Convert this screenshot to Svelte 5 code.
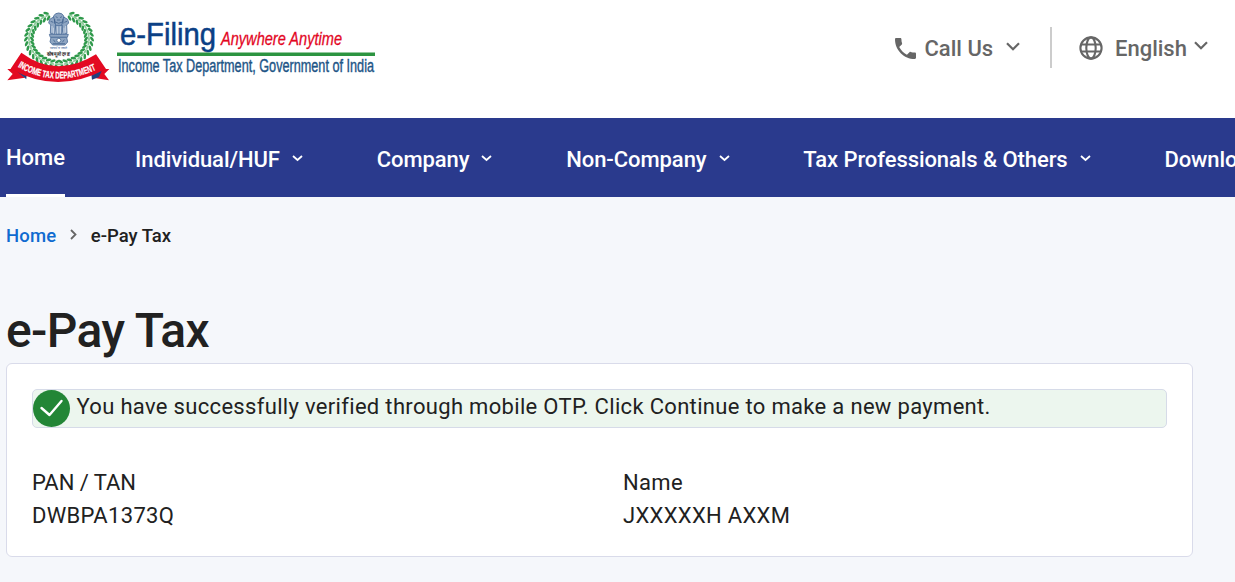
<script>
  const menu = [
    { name: 'Individual/HUF', sub: true },
    { name: 'Company', sub: true },
    { name: 'Non-Company', sub: true },
    { name: 'Tax Professionals & Others', sub: true },
    { name: 'Downloads', sub: false }
  ];

  const details = [
    { label: 'PAN / TAN', value: 'DWBPA1373Q', tight: true },
    { label: 'Name', value: 'JXXXXXH AXXM', tight: false }
  ];

  // leaves of the wreath, mirrored on both sides of the emblem
  function buildLeaves() {
    let leaves = [];
    for (let n = 0; n < 17; n++) {
      const deg = 113 + n * 9.6;
      const a = (deg * Math.PI) / 180;
      [-1, 0, 1].forEach((row) => {
        [-1, 1].forEach((side) => {
          const x = 177 - side * Math.cos(a) * (90 + row * 9);
          const y = 117 - Math.sin(a) * (76 + row * 8);
          const turn = side * (deg - 90 - row * 35);
          leaves.push({ x, y, turn, mid: row === 0 });
        });
      });
    }
    return leaves;
  }

  const leaves = buildLeaves();
</script>

<header>
  <svg class="logo" viewBox="0 0 380 95" width="380" height="95">
    <g transform="scale(0.33333)">
      {#each leaves as leaf}
        <ellipse
          cx={leaf.x}
          cy={leaf.y}
          rx={leaf.mid ? 7 : 8.5}
          ry={leaf.mid ? 3 : 4}
          fill={leaf.mid ? '#8dcb99' : '#2f994b'}
          transform={`rotate(${leaf.turn} ${leaf.x} ${leaf.y})`}
        />
      {/each}

      <!-- lion capital -->
      <g fill="#8ea5c2" stroke="#4a6c99" stroke-width="2.500">
        <path d="M161 48q4-9 15-9t15 9l3 14-5 18h-25l-6-18z" />
        <path d="M161 51l-12 7-3 11 6 6-1 25 12 3 4-28z" />
        <path d="M191 51l12 7 3 11-6 6 1 25-12 3-4-28z" />
        <path d="M166 76h21l-2 27h-17z" />
        <path d="M148 103h57l-3 9h-51z" />
        <path d="M153 112h47l3 14-8 9h-37l-8-9z" />
      </g>
      <g fill="none" stroke="#315582" stroke-width="2">
        <path d="M167 50l6 3M180 53l6-3M171 60h10M166 66q10 8 21 0M164 57v14M189 57v14M152 64l8 3M193 67l8-3" />
        <path d="M156 78v20M161 83v18M192 83v18M197 78v20M172 79v22M181 79v22" stroke="#e3eaf3" />
        <circle cx="176.500" cy="121" r="6" fill="#fff" />
        <path d="M160 119l6 8M193 119l-6 8M158 131h37" />
      </g>
      <text x="150" y="146" class="motto-small" textLength="52" lengthAdjust="spacingAndGlyphs">सत्यमेव जयते</text>
      <text x="141" y="167" class="motto" textLength="68" lengthAdjust="spacingAndGlyphs">कोष मूलो दण्डः</text>

      <path d="M48 207H22l16 15-16 19 53-8z" fill="#e30a22" />
      <path d="M302 207h26l-15 15 14 19-48-8z" fill="#e30a22" />
      <path d="M42 206l38 17-1 15z" fill="#20407f" />
      <path d="M308 206l-34 17 2 16 21-8z" fill="#20407f" />
      <path d="M64 158Q170 237 288 163L318 207Q172 285 32 206Z" fill="#e30a22" />
      <path id="ribbon" d="M53 200Q170 270 302 203" fill="none" />
      <text class="ribbon"><textPath href="#ribbon" textLength="246" lengthAdjust="spacingAndGlyphs">INCOME TAX DEPARTMENT</textPath></text>
    </g>

    <text x="120" y="44.500" class="efiling" textLength="96" lengthAdjust="spacingAndGlyphs">e-Filing</text>
    <text x="221" y="45" class="tagline" textLength="121" lengthAdjust="spacingAndGlyphs">Anywhere Anytime</text>
    <rect x="117" y="52.500" width="258" height="3.500" fill="#2c9440" />
    <text x="118" y="72.300" class="dept" textLength="256" lengthAdjust="spacingAndGlyphs">Income Tax Department, Government of India</text>
  </svg>

  <div class="tools">
    <svg class="phone" viewBox="3 3 18 18" width="21" height="21">
      <path d="M6.620 10.790c1.440 2.830 3.760 5.140 6.590 6.590l2.200-2.200c.27-.27.67-.36 1.020-.24 1.120.37 2.330.57 3.570.57.55 0 1 .45 1 1V20c0 .55-.45 1-1 1-9.390 0-17-7.610-17-17 0-.55.45-1 1-1h3.500c.55 0 1 .45 1 1 0 1.250.2 2.450.57 3.570.11.35.03.74-.25 1.020l-2.200 2.200z" fill="#666" />
    </svg>
    <span class="call">Call Us</span>
    <svg class="arrow" viewBox="0 0 14 9" width="14" height="9"><path d="M1 1.200l6 6 6-6" /></svg>
    <i class="divider"></i>
    <svg class="globe" viewBox="0 0 24 24" width="24" height="24">
      <g fill="none" stroke="#666" stroke-width="2.100">
        <circle cx="12" cy="12" r="10.600" />
        <ellipse cx="12" cy="12" rx="4.700" ry="10.600" />
        <path d="M2.200 8.500h19.600M2.200 15.500h19.600" />
      </g>
    </svg>
    <span class="lang">English</span>
    <svg class="arrow lang-arrow" viewBox="0 0 14 9" width="14" height="9"><path d="M1 1.200l6 6 6-6" /></svg>
  </div>
</header>

<nav>
  <a class="home" href="#home">Home</a>
  {#each menu as item}
    <a class="item" href="#menu">
      <span>{item.name}</span>
      {#if item.sub}
        <svg viewBox="0 0 11 7" width="11" height="7"><path d="M1 1l4.500 4L10 1" /></svg>
      {/if}
    </a>
  {/each}
</nav>

<main>
  <div class="breadcrumb">
    <a href="#home">Home</a>
    <svg viewBox="0 0 7 11" width="7" height="11"><path d="M1 1l4.500 4.500L1 10" /></svg>
    <span>e-Pay Tax</span>
  </div>

  <h1>e-Pay Tax</h1>

  <section class="card">
    <div class="success">
      <svg viewBox="0 0 38 38" width="38" height="38">
        <circle cx="18.500" cy="18.500" r="18.500" fill="#238636" />
        <path d="M8.500 18l8 7L28.500 11" fill="none" stroke="#fff" stroke-width="2.400" stroke-linecap="round" stroke-linejoin="round" />
      </svg>
      <span>You have successfully verified through mobile OTP. Click Continue to make a new payment.</span>
    </div>
    <div class="details">
      {#each details as d}
        <div>
          <div class:tight={d.tight}>{d.label}</div>
          <div>{d.value}</div>
        </div>
      {/each}
    </div>
  </section>
</main>

<style>
  :global(body) {
    background: #f5f7fb;
    font-family: Roboto, sans-serif;
    color: #212121;
    overflow: hidden;
  }

  a {
    text-decoration: none;
  }

  header {
    display: flex;
    justify-content: space-between;
    height: 118px;
    background: #fff;
  }

  .logo text {
    font-family: "Liberation Sans", Arial, sans-serif;
  }
  .logo .efiling {
    font-size: 30.5px;
    fill: #0b4085;
    stroke: #0b4085;
    stroke-width: 0.5px;
  }
  .logo .tagline {
    font-size: 18.5px;
    font-style: italic;
    fill: #e3061f;
    stroke: #e3061f;
    stroke-width: 0.3px;
  }
  .logo .dept {
    font-size: 17.5px;
    fill: #1d5586;
    stroke: #1d5586;
    stroke-width: 0.4px;
  }
  .logo .ribbon {
    font-size: 29px;
    font-weight: bold;
    fill: #fff;
    stroke: #fff;
    stroke-width: 0.7px;
  }
  .logo .motto {
    font-size: 16px;
    font-weight: bold;
    fill: #222;
  }
  .logo .motto-small {
    font-size: 10px;
    fill: #4b6da0;
  }

  .tools {
    display: flex;
    align-items: center;
    height: 95px;
    padding-right: 27.500px;
    font-size: 22px;
    font-weight: 500;
    color: #666;
  }
  .phone {
    margin: 2px 9px 0 0;
  }
  .call {
    width: 69px;
    padding-top: 1px;
    white-space: nowrap;
  }
  .arrow {
    margin: 0 0 2px 12px;
    fill: none;
    stroke: #666;
    stroke-width: 2.200;
  }
  .lang-arrow {
    margin: 0 0 4px 7.500px;
  }
  .divider {
    width: 2px;
    height: 41px;
    margin: 0 27.500px 0 30px;
    background: #ccc;
  }
  .globe {
    margin: 1px 12px 0 0;
  }
  .lang {
    width: 71px;
    padding-top: 1px;
    white-space: nowrap;
  }

  nav {
    display: flex;
    height: 79px;
    padding-left: 6px;
    background: #2a3a8d;
    font-size: 22px;
    font-weight: 500;
    line-height: 84px;
    white-space: nowrap;
  }
  nav a {
    flex: none;
    color: #fff;
  }
  .home {
    box-sizing: border-box;
    height: 79px;
    margin-right: 70px;
    border-bottom: 3px solid #fff;
    line-height: 80px;
  }
  .item {
    display: flex;
    align-items: center;
    height: 84px;
    margin-right: 73.800px;
    letter-spacing: -0.07px;
  }
  .item svg {
    margin: 0 0 3px 12px;
    fill: none;
    stroke: #fff;
    stroke-width: 1.8;
  }

  main {
    padding: 0 42px 0 6px;
  }

  .breadcrumb {
    display: flex;
    align-items: center;
    height: 77px;
    font-size: 18.5px;
    font-weight: 500;
  }
  .breadcrumb a {
    color: #0f6bd0;
    letter-spacing: 0.15px;
  }
  .breadcrumb svg {
    margin: 0 13.500px 2px 14px;
    fill: none;
    stroke: #666;
    stroke-width: 1.8;
  }

  h1 {
    margin: 29px 0 4px;
    font-size: 48px;
    font-weight: 500;
    line-height: 56px;
    letter-spacing: -0.6px;
  }

  .card {
    box-sizing: border-box;
    height: 194px;
    padding: 25px;
    border: 1px solid #d9dbea;
    border-radius: 6px;
    background: #fff;
    font-size: 22px;
    letter-spacing: 0.32px;
  }
  .success {
    box-sizing: border-box;
    display: flex;
    align-items: center;
    height: 39px;
    border: 1px solid #d6dbe8;
    border-radius: 5px;
    background: #ecf6ee;
    white-space: nowrap;
  }
  .success span {
    margin: 0 0 4px 5.500px;
  }
  .details {
    display: grid;
    grid-template-columns: 591px 1fr;
    margin-top: 38px;
    line-height: 33px;
  }
  .tight {
    letter-spacing: -0.05px;
  }
</style>
